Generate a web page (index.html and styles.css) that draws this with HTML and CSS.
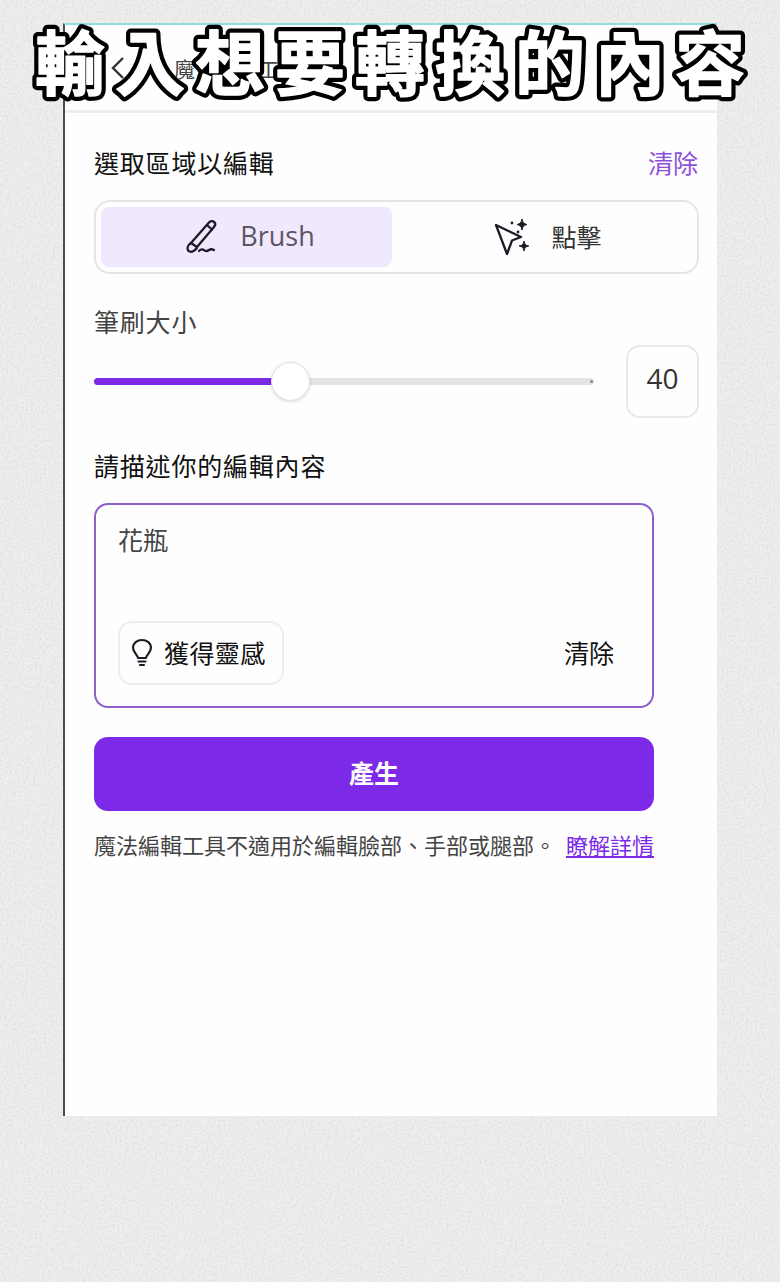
FILE: index.html
```html
<!DOCTYPE html>
<html lang="zh-Hant">
<head>
<meta charset="UTF-8">
<title>魔法編輯工具</title>
<link rel="stylesheet" href="styles.css">
</head>
<body>
    <!--紙張底紋-->
    <svg class="grain" width="780" height="1282">
        <filter id="paper">
            <feTurbulence type="fractalNoise" baseFrequency="0.45" numOctaves="3" seed="4"/>
            <feColorMatrix values="0 0 0 0 0.55  0 0 0 0 0.55  0 0 0 0 0.55  0 0 0 0.8 -0.34"/>
        </filter>
        <rect width="780" height="1282" filter="url(#paper)"/>
    </svg>

    <div class="panel">
        <div class="head">
            <svg class="back" width="16" height="26" viewBox="0 0 16 26"><path d="M13 3 3 13l10 10" fill="none" stroke="#333" stroke-width="2.4"/></svg>
            <span class="head-title">魔法編輯工具</span>
        </div>

        <div class="body">
            <div class="row-label">
                <span class="label strong">選取區域以編輯</span>
                <span class="link-clear">清除</span>
            </div>

            <div class="seg">
                <div class="seg-item active">
                    <svg width="36" height="38" viewBox="0 0 36 38" fill="none" stroke="#1e1a26" stroke-width="2.3" stroke-linecap="round" stroke-linejoin="round">
                        <path d="M6 25 24 4.500c1.500-1.700 3.700-1.900 5.100-.6 1.400 1.300 1.300 3.400-.1 5L12 29"/>
                        <path d="M6 25c-2.500 1.500-4 4.500-3.200 6.800.8 2.200 3.600 2.500 5.700 1.200 2.100-1.300 3.500-3.700 3.500-4"/>
                        <path d="M6 25l6 4M22 7l5 4.500"/>
                        <path d="M14 33c2-2 3.500-2 5-.8s3 1.300 5-.2 3-1 5 0"/>
                    </svg>
                    <span class="seg-text">Brush</span>
                </div>
                <div class="seg-item">
                    <svg width="38" height="38" viewBox="0 0 38 38" fill="none" stroke="#1e1a26" stroke-width="2.3" stroke-linejoin="round">
                        <path d="M2 7 27 19l-9 3.500L13 36z"/>
                        <path d="M28 1c.6 3.600 1.900 4.900 5 5.500-3.100.6-4.400 1.900-5 5.500-.6-3.600-1.900-4.900-5-5.500 3.100-.6 4.400-1.900 5-5.500zM30 23c.6 3.400 1.700 4.500 4.800 5-3.100.5-4.200 1.600-4.800 5-.6-3.400-1.700-4.500-4.800-5 3.100-.5 4.200-1.600 4.800-5z" fill="#1e1a26" stroke-width="1"/>
                        <circle cx="18" cy="5" r="1.400" fill="#1e1a26" stroke="none"/>
                        <circle cx="24" cy="14" r="1.400" fill="#1e1a26" stroke="none"/>
                    </svg>
                    <span class="seg-text cjk">點擊</span>
                </div>
            </div>

            <div class="row-label gap-big">
                <span class="label">筆刷大小</span>
            </div>

            <div class="slider-row">
                <div class="slider">
                    <div class="track-fill"></div>
                    <div class="thumb"></div>
                    <div class="track-rest"></div>
                </div>
                <div class="num">40</div>
            </div>

            <div class="row-label gap-big">
                <span class="label strong">請描述你的編輯內容</span>
            </div>

            <div class="column">
                <div class="prompt">
                    <div class="prompt-text">花瓶</div>
                    <div class="prompt-foot">
                        <div class="idea">
                            <svg width="22" height="30" viewBox="0 0 22 30" fill="none" stroke="#1e1a26" stroke-width="2.2" stroke-linecap="round">
                                <path d="M7 20c0-3-5-5-5-10.500C2 5 6 2 11 2s9 3 9 7.500C20 15 15 17 15 20z" stroke-linejoin="round"/>
                                <path d="M7.500 23.500h7M9 27h4"/>
                            </svg>
                            <span class="idea-text">獲得靈感</span>
                        </div>
                        <span class="prompt-clear">清除</span>
                    </div>
                </div>

                <div class="generate">產生</div>

                <p class="note">魔法編輯工具不適用於編輯臉部、手部或腿部。<a class="more" href="#">瞭解詳情</a></p>
            </div>
        </div>
    </div>

    <!--影片字幕，壓在畫面上；黑邊在下，白色加粗字在上-->
    <svg class="caption" width="780" height="120">
        <g class="cap-edge"><text id="cap" x="35" y="90">輸入想要轉換的內容</text></g>
        <g class="cap-face"><use href="#cap"/></g>
    </svg>
</body>
</html>
```

FILE: styles.css
```css
*{
    margin:0;
    padding:0;
    box-sizing:border-box;
}
body{
    width:780px;
    height:1282px;
    position:relative;
    overflow:hidden;
    padding-top:23px;
    background:#eeeeed;
    font-family:"Noto Sans CJK TC","Noto Sans",sans-serif;
    color:#222;
}
.grain{
    position:absolute;
    left:0;
    top:0;
}
.panel{
    position:relative;
    width:654px;
    height:1093px;
    margin-left:63px;
    background:#fefefe;
    border-left:2px solid #4c4c4c;
    border-top:2px solid #8fdfdf;
}
.head{
    height:88px;
    border-bottom:3px solid #eeeeee;
    display:flex;
    align-items:center;
    padding:0 0 0 45px;
}
.back{
    margin-right:48px;
}
.head-title{
    font-size:21px;
    color:#444;
}
.body{
    padding:0 18px 0 29px;
}
.row-label{
    height:36px;
    margin-top:31px;
    display:flex;
    justify-content:space-between;
    align-items:center;
}
.row-label.gap-big{
    margin-top:29px;
}
.label{
    font-size:25px;
    letter-spacing:.8px;
    color:#444;
    line-height:36px;
}
.label.strong{
    color:#111;
}
.link-clear{
    font-size:25px;
    color:#8c4fdb;
    margin-right:1px;
}
.seg{
    height:74px;
    margin-top:20px;
    border:2px solid #e5e5e5;
    border-radius:16px;
    padding:5px;
    display:flex;
}
.seg-item{
    width:291px;
    height:60px;
    border-radius:8px;
    display:flex;
    align-items:center;
    justify-content:center;
    gap:19px;
}
.seg-item + .seg-item{
    flex:1;
    padding-left:12px;
}
.seg-item.active{
    background:#f0e8fd;
    padding-left:7px;
}
.seg-text{
    font-family:"Open Sans",sans-serif;
    font-size:27px;
    color:#5b5661;
    padding-bottom:3px;
}
.seg-text.cjk{
    font-family:"Noto Sans CJK TC",sans-serif;
    font-size:25px;
    color:#333;
}
.slider-row{
    height:73px;
    margin-top:6px;
    display:flex;
    align-items:center;
    justify-content:space-between;
}
.slider{
    width:500px;
    display:flex;
    align-items:center;
}
.track-fill{
    width:178px;
    height:7px;
    background:#7d2ae8;
    border-radius:4px 0 0 4px;
}
.thumb{
    width:37px;
    height:37px;
    border-radius:50%;
    background:#fff;
    box-shadow:0 0 0 1px #e2e2e2,0 1px 4px rgba(0,0,0,.22);
    flex:none;
    position:relative;
}
.track-rest{
    flex:1;
    height:7px;
    background:#e4e4e4;
    border-radius:0 4px 4px 0;
    display:flex;
    align-items:center;
    justify-content:flex-end;
    padding-right:1px;
}
.track-rest::after{
    content:"";
    width:3px;
    height:3px;
    border-radius:50%;
    background:#888;
}
.num{
    width:73px;
    height:73px;
    border:2px solid #e8e8e8;
    border-radius:14px;
    padding-bottom:7px;
    display:flex;
    align-items:center;
    justify-content:center;
    font-family:"Open Sans",sans-serif;
    font-size:28px;
    color:#333;
}
.column{
    width:560px;
}
.prompt{
    height:205px;
    margin-top:20px;
    border:2px solid #8c5fc9;
    border-radius:14px;
    padding:16px 38px 21px 22px;
    display:flex;
    flex-direction:column;
    justify-content:space-between;
}
.prompt-text{
    font-size:25px;
    line-height:36px;
    color:#444;
}
.prompt-foot{
    display:flex;
    align-items:center;
    justify-content:space-between;
}
.idea{
    width:166px;
    height:64px;
    border:2px solid #eeeeee;
    border-radius:14px;
    display:flex;
    align-items:center;
    gap:11px;
    padding-left:11px;
    font-size:25px;
    letter-spacing:.4px;
    color:#111;
}
.idea-text{
    padding-bottom:3px;
}
.prompt-clear{
    font-size:25px;
    color:#111;
    padding-bottom:3px;
}
.generate{
    height:74px;
    margin-top:29px;
    padding-bottom:5px;
    background:#7d2ae8;
    border-radius:14px;
    display:flex;
    align-items:center;
    justify-content:center;
    color:#fff;
    font-size:25px;
    font-weight:700;
}
.note{
    height:36px;
    margin-top:15px;
    display:flex;
    align-items:center;
    justify-content:space-between;
    font-size:22px;
    color:#444;
    white-space:nowrap;
}
.more{
    color:#7d2ae8;
    font-size:22px;
}
.caption{
    position:absolute;
    left:0;
    top:0;
}
.caption text{
    font-size:70px;
    font-weight:700;
    letter-spacing:10px;
    stroke-linejoin:round;
}
.cap-edge{
    fill:#000;
    stroke:#000;
    stroke-width:10px;
}
.cap-face{
    fill:#fff;
    stroke:#fff;
    stroke-width:1.500px;
}
```
